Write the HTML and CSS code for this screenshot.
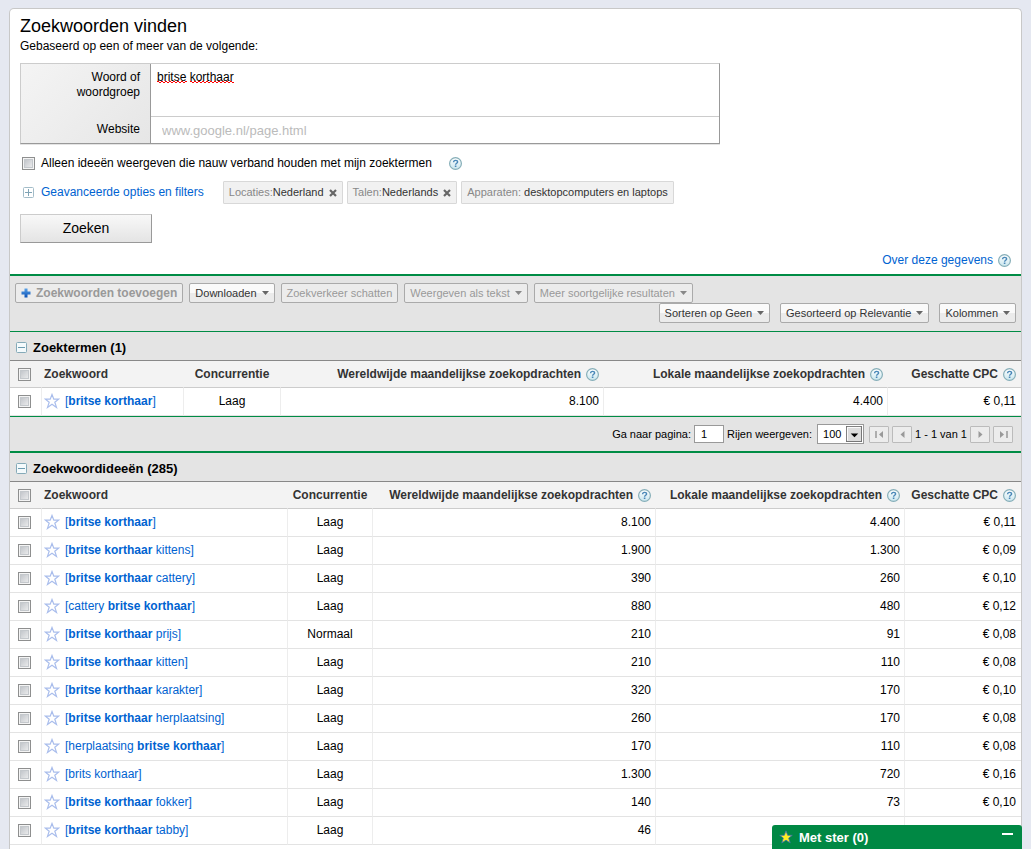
FILE: index.html
```html
<!DOCTYPE html>
<html lang="nl">
<head>
  <meta charset="UTF-8">
  <meta name="viewport" content="width=device-width, initial-scale=1.0">
  <title>Zoekwoorden vinden</title>
  <link rel="stylesheet" href="styles.css">
</head>
<body>
  <svg class="sprite" aria-hidden="true">
    <defs>
      <linearGradient id="help-fill" x1="0" y1="0" x2="0" y2="1">
        <stop offset="0" stop-color="#ffffff"/>
        <stop offset="1" stop-color="#c9e6ee"/>
      </linearGradient>
      <linearGradient id="plus-fill" x1="0" y1="0" x2="0" y2="1">
        <stop offset="0" stop-color="#5aa2e8"/>
        <stop offset="1" stop-color="#0a50b4"/>
      </linearGradient>
    </defs>
    <symbol id="help" viewBox="0 0 13 13">
      <circle cx="6.5" cy="6.5" r="5.9" fill="url(#help-fill)" stroke="#86aeb8" stroke-width="1.2"/>
      <path d="M4.6 5.2C4.6 4 5.4 3.4 6.6 3.4S8.6 4 8.6 5c0 1.300-2 1.300-2 2.700" fill="none" stroke="#4a88b8" stroke-width="1.400"/>
      <rect x="5.800" y="8.500" width="1.600" height="1.500" fill="#4a88b8"/>
    </symbol>
    <symbol id="star" viewBox="0 0 16 16">
      <path d="M8 1.500L9.800 6.200H14.600L10.800 9.200L12.500 14.400L8 11.300L3.500 14.400L5.200 9.200L1.400 6.200H6.200Z" fill="#fff" stroke="#a9bdec" stroke-width="1.200"/>
    </symbol>
    <symbol id="collapse" viewBox="0 0 11 11">
      <rect x=".5" y=".5" width="10" height="10" rx="1" fill="#f4fafc" stroke="#85aab8"/>
      <path d="M2 5.500h7" stroke="#6d9bb0"/>
    </symbol>
    <symbol id="expand" viewBox="0 0 11 11">
      <rect x=".5" y=".5" width="10" height="10" rx="1" fill="#fff" stroke="#a3bcc8"/>
      <path d="M2 5.500h7M5.500 2v7" stroke="#7fa3b5"/>
    </symbol>
    <symbol id="remove" viewBox="0 0 8 8">
      <path d="M1 1l6 6M7 1L1 7" stroke="#666" stroke-width="2.200"/>
    </symbol>
    <symbol id="down" viewBox="0 0 7 4">
      <path d="M0 0h7L3.500 4z" fill="currentColor"/>
    </symbol>
  </svg>

  <main class="panel">
    <form class="finder">
      <h1>Zoekwoorden vinden</h1>
      <p class="subtitle">Gebaseerd op een of meer van de volgende:</p>

      <div class="query">
        <div class="query-labels">
          <label for="words">Woord of woordgroep</label>
          <label for="site">Website</label>
        </div>
        <div class="query-fields">
          <textarea id="words" spellcheck="false">britse korthaar</textarea>
          <input type="text" id="site" placeholder="www.google.nl/page.html">
        </div>
      </div>

      <div class="only-related">
        <input type="checkbox" id="related">
        <label for="related">Alleen ideeën weergeven die nauw verband houden met mijn zoektermen</label>
        <svg class="help"><use href="#help"/></svg>
      </div>

      <div class="filters">
        <svg class="toggle"><use href="#expand"/></svg>
        <a class="advanced" href="#">Geavanceerde opties en filters</a>
        <span class="chip"><i>Locaties:</i>Nederland<button type="button" aria-label="Verwijderen"><svg><use href="#remove"/></svg></button></span>
        <span class="chip"><i>Talen:</i>Nederlands<button type="button" aria-label="Verwijderen"><svg><use href="#remove"/></svg></button></span>
        <span class="chip"><i>Apparaten: </i>desktopcomputers en laptops</span>
      </div>

      <button type="button" class="search">Zoeken</button>

      <div class="about">
        <a href="#">Over deze gegevens</a>
        <svg class="help"><use href="#help"/></svg>
      </div>
    </form>

    <div class="toolbar">
      <div class="tools">
        <button class="btn add" disabled><svg viewBox="0 0 10 10"><path d="M3.500 0.500h3v3h3v3h-3v3h-3v-3h-3v-3h3z" fill="url(#plus-fill)"/></svg>Zoekwoorden toevoegen</button>
        <button class="btn">Downloaden<svg class="arrow"><use href="#down"/></svg></button>
        <button class="btn" disabled>Zoekverkeer schatten</button>
        <button class="btn" disabled>Weergeven als tekst<svg class="arrow"><use href="#down"/></svg></button>
        <button class="btn" disabled>Meer soortgelijke resultaten<svg class="arrow"><use href="#down"/></svg></button>
      </div>
      <div class="tools views">
        <button class="btn">Sorteren op Geen<svg class="arrow"><use href="#down"/></svg></button>
        <button class="btn">Gesorteerd op Relevantie<svg class="arrow"><use href="#down"/></svg></button>
        <button class="btn">Kolommen<svg class="arrow"><use href="#down"/></svg></button>
      </div>
    </div>

    <section>
      <h2><svg class="toggle"><use href="#collapse"/></svg>Zoektermen (1)</h2>
      <table class="terms">
        <colgroup><col class="c-check"><col><col class="c-comp"><col class="c-world"><col class="c-local"><col class="c-cpc"></colgroup>
        <thead>
          <tr>
            <th><input type="checkbox" aria-label="Alles selecteren"></th>
            <th>Zoekwoord</th>
            <th>Concurrentie</th>
            <th>Wereldwijde maandelijkse zoekopdrachten<svg class="help"><use href="#help"/></svg></th>
            <th>Lokale maandelijkse zoekopdrachten<svg class="help"><use href="#help"/></svg></th>
            <th>Geschatte CPC<svg class="help"><use href="#help"/></svg></th>
          </tr>
        </thead>
        <tbody>
          <tr><td><input type="checkbox" aria-label="Selecteren"></td><td><svg class="star"><use href="#star"/></svg><a href="#">[<b>britse korthaar</b>]</a></td><td>Laag</td><td>8.100</td><td>4.400</td><td>€ 0,11</td></tr>
        </tbody>
      </table>
      <div class="pager">
        <label for="page">Ga naar pagina:</label>
        <input type="text" id="page" value="1">
        <label for="rows">Rijen weergeven:</label>
        <span class="rows">
          <select id="rows"><option>100</option></select>
          <svg viewBox="0 0 17 17"><rect x=".5" y=".5" width="16" height="16" fill="#ddd" stroke="#707070"/><path d="M1.500 15.500v-14h14" fill="none" stroke="#fff"/><path d="M5 8h8l-4 4z" fill="#000"/></svg>
        </span>
        <div class="pages">
          <button disabled aria-label="Eerste"><svg viewBox="0 0 9 7"><path d="M1 0v7" stroke="#999" stroke-width="1.500"/><path d="M8 0v7L4 3.500z" fill="#999"/></svg></button>
          <button disabled aria-label="Vorige"><svg viewBox="0 0 9 7"><path d="M6.500 0v7L2.500 3.500z" fill="#999"/></svg></button>
          <span>1 - 1 van 1</span>
          <button disabled aria-label="Volgende"><svg viewBox="0 0 9 7"><path d="M2.500 0v7L6.500 3.500z" fill="#999"/></svg></button>
          <button disabled aria-label="Laatste"><svg viewBox="0 0 9 7"><path d="M8 0v7" stroke="#999" stroke-width="1.500"/><path d="M1 0v7L5 3.500z" fill="#999"/></svg></button>
        </div>
      </div>
    </section>

    <section>
      <h2><svg class="toggle"><use href="#collapse"/></svg>Zoekwoordideeën (285)</h2>
      <table class="ideas">
        <colgroup><col class="c-check"><col><col class="c-comp"><col class="c-world"><col class="c-local"><col class="c-cpc"></colgroup>
        <thead>
          <tr>
            <th><input type="checkbox" aria-label="Alles selecteren"></th>
            <th>Zoekwoord</th>
            <th>Concurrentie</th>
            <th>Wereldwijde maandelijkse zoekopdrachten<svg class="help"><use href="#help"/></svg></th>
            <th>Lokale maandelijkse zoekopdrachten<svg class="help"><use href="#help"/></svg></th>
            <th>Geschatte CPC<svg class="help"><use href="#help"/></svg></th>
          </tr>
        </thead>
        <tbody>
          <tr><td><input type="checkbox" aria-label="Selecteren"></td><td><svg class="star"><use href="#star"/></svg><a href="#">[<b>britse korthaar</b>]</a></td><td>Laag</td><td>8.100</td><td>4.400</td><td>€ 0,11</td></tr>
          <tr><td><input type="checkbox" aria-label="Selecteren"></td><td><svg class="star"><use href="#star"/></svg><a href="#">[<b>britse korthaar</b> kittens]</a></td><td>Laag</td><td>1.900</td><td>1.300</td><td>€ 0,09</td></tr>
          <tr><td><input type="checkbox" aria-label="Selecteren"></td><td><svg class="star"><use href="#star"/></svg><a href="#">[<b>britse korthaar</b> cattery]</a></td><td>Laag</td><td>390</td><td>260</td><td>€ 0,10</td></tr>
          <tr><td><input type="checkbox" aria-label="Selecteren"></td><td><svg class="star"><use href="#star"/></svg><a href="#">[cattery <b>britse korthaar</b>]</a></td><td>Laag</td><td>880</td><td>480</td><td>€ 0,12</td></tr>
          <tr><td><input type="checkbox" aria-label="Selecteren"></td><td><svg class="star"><use href="#star"/></svg><a href="#">[<b>britse korthaar</b> prijs]</a></td><td>Normaal</td><td>210</td><td>91</td><td>€ 0,08</td></tr>
          <tr><td><input type="checkbox" aria-label="Selecteren"></td><td><svg class="star"><use href="#star"/></svg><a href="#">[<b>britse korthaar</b> kitten]</a></td><td>Laag</td><td>210</td><td>110</td><td>€ 0,08</td></tr>
          <tr><td><input type="checkbox" aria-label="Selecteren"></td><td><svg class="star"><use href="#star"/></svg><a href="#">[<b>britse korthaar</b> karakter]</a></td><td>Laag</td><td>320</td><td>170</td><td>€ 0,10</td></tr>
          <tr><td><input type="checkbox" aria-label="Selecteren"></td><td><svg class="star"><use href="#star"/></svg><a href="#">[<b>britse korthaar</b> herplaatsing]</a></td><td>Laag</td><td>260</td><td>170</td><td>€ 0,08</td></tr>
          <tr><td><input type="checkbox" aria-label="Selecteren"></td><td><svg class="star"><use href="#star"/></svg><a href="#">[herplaatsing <b>britse korthaar</b>]</a></td><td>Laag</td><td>170</td><td>110</td><td>€ 0,08</td></tr>
          <tr><td><input type="checkbox" aria-label="Selecteren"></td><td><svg class="star"><use href="#star"/></svg><a href="#">[brits korthaar]</a></td><td>Laag</td><td>1.300</td><td>720</td><td>€ 0,16</td></tr>
          <tr><td><input type="checkbox" aria-label="Selecteren"></td><td><svg class="star"><use href="#star"/></svg><a href="#">[<b>britse korthaar</b> fokker]</a></td><td>Laag</td><td>140</td><td>73</td><td>€ 0,10</td></tr>
          <tr><td><input type="checkbox" aria-label="Selecteren"></td><td><svg class="star"><use href="#star"/></svg><a href="#">[<b>britse korthaar</b> tabby]</a></td><td>Laag</td><td>46</td><td></td><td></td></tr>
        </tbody>
      </table>
    </section>
  </main>

  <div class="starred">
    <svg viewBox="0 0 14 14"><path d="M7 .800L8.700 5.300H13.300L9.700 8.100L11.200 13L7 10.100L2.800 13L4.300 8.100L.700 5.300H5.300Z" fill="#ffee22" stroke="#3b6fb0" stroke-width=".8"/></svg>
    <span>Met ster (0)</span>
    <button aria-label="Minimaliseren"></button>
  </div>
</body>
</html>
```
FILE: styles.css
```css
* { box-sizing: border-box; }
body {
  margin: 0;
  padding: 8px 9px 0;
  min-height: 100vh;
  display: flex;
  flex-direction: column;
  background: #e5e8f1;
  color: #000;
  font: 12px/15px "Liberation Sans", Arial, sans-serif;
}
.sprite { position: absolute; width: 0; height: 0; }
svg { flex: none; }
button, input, textarea, select { font: inherit; color: inherit; }
a { color: #0063d1; text-decoration: none; }

.panel {
  flex: 1;
  background: #fff;
  border: 1px solid #c8c8c8;
  border-bottom: 0;
  border-radius: 5px 5px 0 0;
}

input[type="checkbox"] {
  appearance: none;
  flex: none;
  display: block;
  width: 13px;
  height: 13px;
  margin: 0;
  border: 1px solid #8e8f8f;
  background: linear-gradient(135deg, #b8bcc2, #f4f4f4);
  box-shadow: inset 0 0 0 1px #f4f4f4, inset 0 0 0 2px #c4c8cc;
}
.help { width: 13px; height: 13px; }
.toggle { width: 11px; height: 11px; }

/* search form */
.finder { padding: 6px 10px; }
h1 {
  margin: 0 0 2px;
  font-size: 18px;
  line-height: 22px;
  font-weight: normal;
}
.subtitle { margin: 0 0 9px; }
.query {
  display: flex;
  max-width: 700px;
  border: 1px solid #999;
  border-top-color: #ccc;
  border-left-color: #ccc;
  box-shadow: 0 1px 0 #e4e4e4;
}
.query-labels {
  display: flex;
  flex-direction: column;
  justify-content: space-between;
  width: 130px;
  padding: 6px 10px 6px 48px;
  border-right: 1px solid #999;
  background: linear-gradient(135deg, #f4f4f4, #e6e6e6);
  text-align: right;
}
.query-fields { flex: 1; display: flex; flex-direction: column; }
.query textarea {
  --up: repeating-linear-gradient(90deg, #f00 0 2px, transparent 2px 4px);
  --low: repeating-linear-gradient(90deg, transparent 0 2px, #f00 2px 4px);
  height: 52px;
  padding: 6px;
  border: 0;
  outline: 0;
  resize: none;
  /* red squiggle under both words */
  background: var(--up) 6px 17px / 30px 1px no-repeat,
    var(--low) 6px 18px / 30px 1px no-repeat,
    var(--up) 39px 17px / 44px 1px no-repeat,
    var(--low) 39px 18px / 44px 1px no-repeat;
}
.query input {
  height: 27px;
  padding: 0 11px;
  border: 0;
  border-top: 1px solid #ccc;
  outline: 0;
  font-size: 13px;
}
.query input::placeholder { color: #bbb; }
.only-related {
  display: flex;
  align-items: center;
  gap: 6px;
  margin-top: 12px;
  padding-left: 2px;
}
.only-related .help { margin-left: 11px; }
.filters {
  display: flex;
  align-items: center;
  gap: 4px;
  margin: 10px 0;
  padding-left: 3px;
}
.advanced { margin: 0 15px 0 3px; }
.chip {
  display: flex;
  align-items: center;
  height: 23px;
  padding: 0 5px;
  border: 1px solid #d8d8d8;
  border-radius: 1px;
  background: #f1f1f1;
  color: #333;
  font-size: 11px;
  white-space: pre;
}
.chip i { color: #888; font-style: normal; }
.chip button {
  display: flex;
  margin-left: 5px;
  padding: 0;
  border: 0;
  background: none;
}
.chip svg { width: 8px; height: 8px; }
.search {
  display: block;
  width: 132px;
  height: 29px;
  border: 1px solid #999;
  border-top-color: #ccc;
  border-left-color: #ccc;
  background: linear-gradient(#f8f8f8, #e4e4e4);
  font-size: 14px;
}
.about {
  display: flex;
  justify-content: flex-end;
  align-items: center;
  gap: 5px;
  margin-top: 10px;
}

/* toolbar */
.toolbar {
  padding: 7px 5px 8px;
  border-top: 2px solid #008c45;
  border-bottom: 1px solid #008c45;
  background: #e4e4e4;
}
.tools { display: flex; gap: 6px; }
.views { justify-content: flex-end; gap: 10px; }
.btn {
  display: flex;
  align-items: center;
  gap: 5px;
  height: 20px;
  padding: 0 5px;
  border: 1px solid #aaa;
  border-radius: 2px;
  background: linear-gradient(#fafafa 50%, #ebebeb 50%);
  color: #333;
  font-size: 11px;
  white-space: nowrap;
}
.btn:disabled { background: #ececec; color: #999; }
.btn .arrow { width: 7px; height: 4px; color: #666; }
.btn:disabled .arrow { color: #888; }
.add { font-size: 12px; font-weight: bold; }
.add svg { width: 10px; height: 10px; }

/* result tables */
h2 {
  display: flex;
  align-items: center;
  gap: 6px;
  height: 29px;
  margin: 0;
  padding: 2px 6px 0;
  border-bottom: 1px solid #888;
  background: #e4e4e4;
  font-size: 13px;
}
table {
  width: 100%;
  table-layout: fixed;
  border-collapse: separate;
  border-spacing: 0;
}
.c-check { width: 32px; }
.terms .c-comp { width: 97px; }
.terms .c-world { width: 323px; }
.terms .c-local { width: 284px; }
.terms .c-cpc { width: 133px; }
.ideas .c-comp { width: 85px; }
.ideas .c-world { width: 283px; }
.ideas .c-local { width: 249px; }
.ideas .c-cpc { width: 116px; }
th {
  height: 27px;
  padding: 0 4px;
  border-right: 1px solid #f3f3f3;
  border-bottom: 1px solid #ccc;
  background: #f3f3f3;
  color: #333;
  text-align: right;
  white-space: nowrap;
}
th .help { margin-left: 5px; vertical-align: -3px; }
td {
  height: 28px;
  padding: 0 4px;
  border-right: 1px solid #ededed;
  border-bottom: 1px solid #e3e3e3;
  text-align: right;
  white-space: nowrap;
}
th:first-child, td:first-child { padding-left: 8px; }
th:nth-child(2), td:nth-child(2) { padding-left: 2px; text-align: left; }
th:nth-child(3), td:nth-child(3) { text-align: center; }
th:last-child, td:last-child { padding-right: 5px; border-right: 0; }
.star { width: 16px; height: 16px; margin: -2px 5px -2px 0; vertical-align: -2px; }

.pager {
  display: flex;
  justify-content: flex-end;
  align-items: center;
  height: 37px;
  padding-right: 8px;
  border-top: 1px solid #008c45;
  border-bottom: 2px solid #008c45;
  background: #e4e4e4;
  font-size: 11px;
}
.pager input {
  width: 30px;
  height: 18px;
  margin: 0 3px;
  padding: 0 6px;
  border: 1px solid #999;
}
.rows { position: relative; margin: 0 5px; }
.rows select {
  appearance: none;
  display: block;
  width: 47px;
  height: 20px;
  padding: 0 5px;
  border: 1px solid #999;
  border-radius: 0;
  background: #fff;
}
.rows svg {
  position: absolute;
  top: 2px;
  right: 2px;
  width: 16px;
  height: 16px;
  pointer-events: none;
}
.pages { display: flex; align-items: center; gap: 3px; }
.pages button {
  display: flex;
  align-items: center;
  justify-content: center;
  width: 20px;
  height: 17px;
  padding: 0;
  border: 1px solid #bbb;
  border-radius: 1px;
  background: #ececec;
}
.pages svg { width: 9px; height: 7px; }

/* starred keywords dock */
.starred {
  position: fixed;
  right: 9px;
  bottom: 0;
  display: flex;
  align-items: center;
  gap: 6px;
  width: 250px;
  height: 24px;
  padding: 0 9px 0 7px;
  border-radius: 3px 3px 0 0;
  background: #008844;
  color: #fff;
  font-size: 13px;
  font-weight: bold;
}
.starred svg { width: 14px; height: 14px; }
.starred button {
  width: 11px;
  height: 2px;
  margin: 0 0 6px auto;
  padding: 0;
  border: 0;
  background: #fff;
}
```
